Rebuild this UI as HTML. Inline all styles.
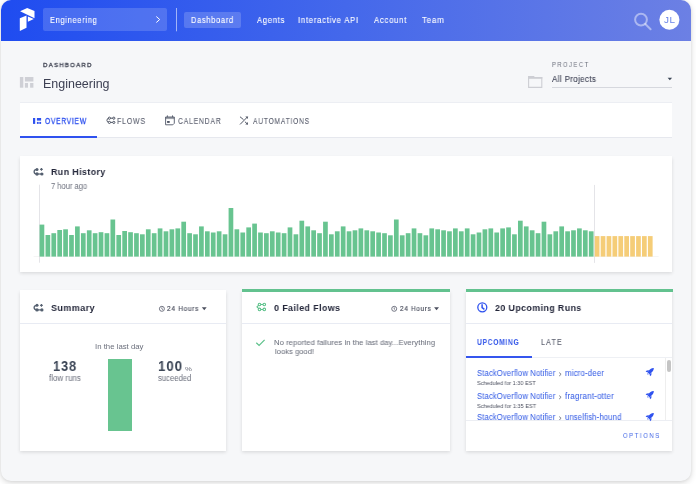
<!DOCTYPE html>
<html><head><meta charset="utf-8"><title>Dashboard</title>
<style>
html,body{margin:0;padding:0;}
body{width:696px;height:484px;overflow:hidden;position:relative;background:#ffffff;font-family:"Liberation Sans",sans-serif;}
.t{position:absolute;white-space:nowrap;line-height:1;transform-origin:0 0;will-change:transform;}
.b{position:absolute;}
.abs{position:absolute;overflow:visible;}
.win{position:absolute;left:1px;top:0px;width:690px;height:480.5px;border-radius:10px;background:#f6f7f9;box-shadow:0 2px 6px rgba(0,0,0,0.15),0 0 3px rgba(0,0,0,0.07);}
.nav{position:absolute;left:1px;top:0px;width:690px;height:40.5px;border-radius:10px 10px 0 0;background:linear-gradient(90deg,#1f4cf0 0%,#4468eb 50%,#6c80e4 100%);}
</style></head><body>
<div class="win"></div>
<div class="nav"></div>
<svg class="abs" width="696" height="45" viewBox="0 0 696 45" style="left:0;top:0">
<polygon points="20.1,11.3 27.2,8.0 34.5,11.1 34.5,18.2" fill="#fff"/>
<polygon points="27.9,16.5 33.8,18.9 27.9,21.8" fill="#fff"/>
<polygon points="19.8,18.2 26.5,15.6 26.5,27.8 19.8,31.1" fill="#fff"/>
<rect x="176" y="8" width="1" height="23.3" fill="rgba(255,255,255,0.55)"/>
<path d="M156.3,16.5 L159.7,19.5 L156.3,22.5" stroke="#fff" stroke-width="1.0" fill="none"/>
<circle cx="641" cy="19.6" r="5.9" stroke="rgba(255,255,255,0.45)" stroke-width="2" fill="none"/>
<path d="M645.3,24 L650.6,29.3" stroke="rgba(255,255,255,0.45)" stroke-width="2" stroke-linecap="round"/>
<circle cx="669.4" cy="19.7" r="10" fill="#fff"/>
</svg>
<div class="b" style="left:43px;top:8px;width:124.00px;height:23.00px;background:rgba(255,255,255,0.16);border-radius:2px"></div>
<div class="t" style="left:50.03px;top:16.00px;font-size:8.588px;font-weight:400;letter-spacing:0.859px;color:#fff;transform:scaleX(0.8597);-webkit-text-stroke:0.12px #fff;">Engineering</div>
<div class="b" style="left:184.2px;top:12px;width:56.50px;height:15.50px;background:rgba(255,255,255,0.18);border-radius:2px"></div>
<div class="t" style="left:191.45px;top:16.00px;font-size:8.734px;font-weight:400;letter-spacing:0.873px;color:#fff;transform:scaleX(0.8492);-webkit-text-stroke:0.12px #fff;">Dashboard</div>
<div class="t" style="left:257.02px;top:16.00px;font-size:8.734px;font-weight:400;letter-spacing:0.873px;color:#fff;transform:scaleX(0.8657);-webkit-text-stroke:0.12px #fff;">Agents</div>
<div class="t" style="left:298.10px;top:16.00px;font-size:8.734px;font-weight:400;letter-spacing:0.873px;color:#fff;transform:scaleX(0.8786);-webkit-text-stroke:0.12px #fff;">Interactive API</div>
<div class="t" style="left:374.06px;top:16.00px;font-size:8.734px;font-weight:400;letter-spacing:0.873px;color:#fff;transform:scaleX(0.8799);-webkit-text-stroke:0.12px #fff;">Account</div>
<div class="t" style="left:422.45px;top:16.00px;font-size:8.734px;font-weight:400;letter-spacing:0.873px;color:#fff;transform:scaleX(0.9053);-webkit-text-stroke:0.12px #fff;">Team</div>
<div class="t" style="left:664.16px;top:16.00px;font-size:9.025px;font-weight:400;letter-spacing:0.451px;color:#6a84e8;transform:scaleX(1.1019);">JL</div>
<svg class="abs" width="40" height="20" viewBox="0 0 40 20" style="left:0;top:70px">
<g fill="#cfd0d6">
<rect x="19.9" y="7.0" width="3.4" height="10.7"/>
<rect x="24.9" y="7.0" width="8.5" height="4.5"/>
<rect x="24.9" y="13.0" width="3.1" height="4.7"/>
<rect x="30.1" y="13.0" width="3.3" height="4.7"/>
</g></svg>
<div class="t" style="left:43.34px;top:62.00px;font-size:6.259px;font-weight:400;letter-spacing:1.252px;color:#3f4352;transform:scaleX(0.9786);-webkit-text-stroke:0.3px #3f4352;">DASHBOARD</div>
<div class="t" style="left:43.37px;top:78.00px;font-size:12.082px;font-weight:400;letter-spacing:0.000px;color:#3d4053;transform:scaleX(1.0320);">Engineering</div>
<div class="t" style="left:552.47px;top:62.00px;font-size:6.550px;font-weight:400;letter-spacing:1.638px;color:#6b6f7c;transform:scaleX(0.8953);">PROJECT</div>
<div class="t" style="left:552.10px;top:75.00px;font-size:8.588px;font-weight:400;letter-spacing:0.429px;color:#3d4053;transform:scaleX(0.9226);-webkit-text-stroke:0.12px #3d4053;">All Projects</div>
<div class="b" style="left:552px;top:86.6px;width:120.30px;height:1.00px;background:#d6d8de"></div>
<svg class="abs" width="200" height="30" viewBox="0 0 200 30" style="left:500px;top:65px">
<polygon points="167.6,12.8 172.1,12.8 169.85,15.2" fill="#3d4757"/>
<path d="M28.6,12.6 h13.2 v9.8 h-13.2 z" fill="none" stroke="#cdced4" stroke-width="1.1"/>
<path d="M28,11.0 h5.8 l1.1,1.1 h7.4 v1.6 h-14.3 z" fill="#cdced4"/>
</svg>
<div class="b" style="left:19.7px;top:102.1px;width:652.50px;height:35.90px;background:#fff;border-top:1px solid #eceef3;border-bottom:1px solid #e6e8ee;box-sizing:border-box"></div>
<div class="b" style="left:19.7px;top:135.9px;width:76.90px;height:2.00px;background:#2f52ef"></div>
<div class="t" style="left:45.29px;top:117.00px;font-size:8.297px;font-weight:400;letter-spacing:0.996px;color:#2f52ef;transform:scaleX(0.7973);-webkit-text-stroke:0.32px #2f52ef;">OVERVIEW</div>
<div class="t" style="left:117.12px;top:117.00px;font-size:8.297px;font-weight:400;letter-spacing:0.996px;color:#5d6170;transform:scaleX(0.8382);-webkit-text-stroke:0.1px #5d6170;">FLOWS</div>
<div class="t" style="left:178.47px;top:117.00px;font-size:8.297px;font-weight:400;letter-spacing:0.996px;color:#5d6170;transform:scaleX(0.8214);-webkit-text-stroke:0.1px #5d6170;">CALENDAR</div>
<div class="t" style="left:253.35px;top:117.00px;font-size:8.297px;font-weight:400;letter-spacing:0.996px;color:#5d6170;transform:scaleX(0.8018);-webkit-text-stroke:0.1px #5d6170;">AUTOMATIONS</div>
<svg class="abs" width="696" height="484" viewBox="0 0 696 484" style="left:0;top:0">
<g fill="#2f52ef">
<rect x="33" y="118" width="2.2" height="5.9"/>
<rect x="36.9" y="118" width="4.2" height="2.6"/>
<rect x="36.9" y="121.9" width="1.8" height="2"/>
<rect x="39.3" y="121.9" width="1.8" height="2"/>
</g>
<g fill="none" stroke="#4f5564" stroke-width="1.0" stroke-linejoin="round">
<path d="M109.4,118.2 A2.5,2.1 0 0 0 109.4,122.4"/>
<path d="M109.4,118.2 h4.4 M109.4,122.4 h4.4"/>
<g fill="#fff">
<circle cx="109.4" cy="118.2" r="1.1"/><circle cx="113.8" cy="118.2" r="1.1"/>
<circle cx="109.4" cy="122.4" r="1.1"/><circle cx="113.8" cy="122.4" r="1.1"/>
</g>
</g>
<g fill="none" stroke="#596070" stroke-width="0.95">
<path d="M165.6,117 h8.7 v6.3 l-1.5,1.5 h-7.2 z"/>
<rect x="165.6" y="117" width="8.7" height="2.1" fill="#4f5564" fill-opacity="0.55" stroke="none"/>
<path d="M167.4,115.4 v1.8 M172.5,115.4 v1.8"/>
<rect x="167.1" y="121" width="2.6" height="1.9" fill="#4f5564" stroke="none"/>
</g>
<g fill="none" stroke="#4f5564" stroke-width="1.0" stroke-linecap="round">
<path d="M240.3,117 L243.2,119.4 M245.2,122.0 L247.4,124.0 M240.3,124.2 L247.3,117.1"/>
<path d="M245.3,116.5 h2.6 v2.6 z" fill="#4f5564" stroke="none"/>
<path d="M247.9,121.9 v2.6 h-2.6 z" fill="#4f5564" stroke="none"/>
</g>
</svg>
<div class="b" style="left:20px;top:155.5px;width:652.40px;height:116.20px;background:#fff;box-shadow:0 1.5px 3.5px rgba(0,0,0,0.13)"></div>
<div class="t" style="left:51.31px;top:167.00px;font-size:9.607px;font-weight:700;letter-spacing:0.432px;color:#24273a;transform:scaleX(0.9243);">Run History</div>
<div class="t" style="left:51.40px;top:183.00px;font-size:8.149px;font-weight:400;letter-spacing:0.000px;color:#6b6f7c;transform:scaleX(0.9299);">7 hour ago</div>
<svg class="abs" width="696" height="484" viewBox="0 0 696 484" style="left:0;top:0"><rect x="33.6" y="256.3" width="625" height="0.6" fill="#eeeeee"/><rect x="39" y="184.7" width="0.7" height="78" fill="#d9d9de"/><rect x="594.2" y="184.9" width="0.7" height="78" fill="#d9d9de"/><rect x="39.60" y="224.60" width="4.7" height="32.00" fill="#68c490"/>
<rect x="45.51" y="235.00" width="4.7" height="21.60" fill="#68c490"/>
<rect x="51.41" y="233.20" width="4.7" height="23.40" fill="#68c490"/>
<rect x="57.32" y="230.00" width="4.7" height="26.60" fill="#68c490"/>
<rect x="63.22" y="229.30" width="4.7" height="27.30" fill="#68c490"/>
<rect x="69.13" y="235.00" width="4.7" height="21.60" fill="#68c490"/>
<rect x="75.04" y="226.40" width="4.7" height="30.20" fill="#68c490"/>
<rect x="80.94" y="233.20" width="4.7" height="23.40" fill="#68c490"/>
<rect x="86.85" y="230.30" width="4.7" height="26.30" fill="#68c490"/>
<rect x="92.75" y="233.20" width="4.7" height="23.40" fill="#68c490"/>
<rect x="98.66" y="232.20" width="4.7" height="24.40" fill="#68c490"/>
<rect x="104.57" y="233.20" width="4.7" height="23.40" fill="#68c490"/>
<rect x="110.47" y="219.50" width="4.7" height="37.10" fill="#68c490"/>
<rect x="116.38" y="235.00" width="4.7" height="21.60" fill="#68c490"/>
<rect x="122.28" y="231.00" width="4.7" height="25.60" fill="#68c490"/>
<rect x="128.19" y="232.20" width="4.7" height="24.40" fill="#68c490"/>
<rect x="134.10" y="233.20" width="4.7" height="23.40" fill="#68c490"/>
<rect x="140.00" y="234.30" width="4.7" height="22.30" fill="#68c490"/>
<rect x="145.91" y="229.30" width="4.7" height="27.30" fill="#68c490"/>
<rect x="151.81" y="233.20" width="4.7" height="23.40" fill="#68c490"/>
<rect x="157.72" y="228.40" width="4.7" height="28.20" fill="#68c490"/>
<rect x="163.63" y="231.30" width="4.7" height="25.30" fill="#68c490"/>
<rect x="169.53" y="229.30" width="4.7" height="27.30" fill="#68c490"/>
<rect x="175.44" y="228.40" width="4.7" height="28.20" fill="#68c490"/>
<rect x="181.34" y="221.70" width="4.7" height="34.90" fill="#68c490"/>
<rect x="187.25" y="233.20" width="4.7" height="23.40" fill="#68c490"/>
<rect x="193.16" y="234.30" width="4.7" height="22.30" fill="#68c490"/>
<rect x="199.06" y="226.40" width="4.7" height="30.20" fill="#68c490"/>
<rect x="204.97" y="231.30" width="4.7" height="25.30" fill="#68c490"/>
<rect x="210.87" y="232.50" width="4.7" height="24.10" fill="#68c490"/>
<rect x="216.78" y="231.30" width="4.7" height="25.30" fill="#68c490"/>
<rect x="222.69" y="234.30" width="4.7" height="22.30" fill="#68c490"/>
<rect x="228.59" y="208.00" width="4.7" height="48.60" fill="#68c490"/>
<rect x="234.50" y="229.30" width="4.7" height="27.30" fill="#68c490"/>
<rect x="240.40" y="232.50" width="4.7" height="24.10" fill="#68c490"/>
<rect x="246.31" y="227.40" width="4.7" height="29.20" fill="#68c490"/>
<rect x="252.22" y="223.60" width="4.7" height="33.00" fill="#68c490"/>
<rect x="258.12" y="232.50" width="4.7" height="24.10" fill="#68c490"/>
<rect x="264.03" y="233.20" width="4.7" height="23.40" fill="#68c490"/>
<rect x="269.93" y="231.30" width="4.7" height="25.30" fill="#68c490"/>
<rect x="275.84" y="232.50" width="4.7" height="24.10" fill="#68c490"/>
<rect x="281.75" y="233.20" width="4.7" height="23.40" fill="#68c490"/>
<rect x="287.65" y="227.40" width="4.7" height="29.20" fill="#68c490"/>
<rect x="293.56" y="234.30" width="4.7" height="22.30" fill="#68c490"/>
<rect x="299.46" y="220.70" width="4.7" height="35.90" fill="#68c490"/>
<rect x="305.37" y="226.40" width="4.7" height="30.20" fill="#68c490"/>
<rect x="311.28" y="230.30" width="4.7" height="26.30" fill="#68c490"/>
<rect x="317.18" y="233.20" width="4.7" height="23.40" fill="#68c490"/>
<rect x="323.09" y="221.70" width="4.7" height="34.90" fill="#68c490"/>
<rect x="328.99" y="234.30" width="4.7" height="22.30" fill="#68c490"/>
<rect x="334.90" y="231.30" width="4.7" height="25.30" fill="#68c490"/>
<rect x="340.81" y="226.40" width="4.7" height="30.20" fill="#68c490"/>
<rect x="346.71" y="231.30" width="4.7" height="25.30" fill="#68c490"/>
<rect x="352.62" y="230.30" width="4.7" height="26.30" fill="#68c490"/>
<rect x="358.52" y="228.40" width="4.7" height="28.20" fill="#68c490"/>
<rect x="364.43" y="230.30" width="4.7" height="26.30" fill="#68c490"/>
<rect x="370.34" y="231.30" width="4.7" height="25.30" fill="#68c490"/>
<rect x="376.24" y="232.50" width="4.7" height="24.10" fill="#68c490"/>
<rect x="382.15" y="233.20" width="4.7" height="23.40" fill="#68c490"/>
<rect x="388.05" y="235.30" width="4.7" height="21.30" fill="#68c490"/>
<rect x="393.96" y="219.50" width="4.7" height="37.10" fill="#68c490"/>
<rect x="399.87" y="235.30" width="4.7" height="21.30" fill="#68c490"/>
<rect x="405.77" y="233.20" width="4.7" height="23.40" fill="#68c490"/>
<rect x="411.68" y="228.40" width="4.7" height="28.20" fill="#68c490"/>
<rect x="417.58" y="233.20" width="4.7" height="23.40" fill="#68c490"/>
<rect x="423.49" y="235.30" width="4.7" height="21.30" fill="#68c490"/>
<rect x="429.40" y="228.40" width="4.7" height="28.20" fill="#68c490"/>
<rect x="435.30" y="229.30" width="4.7" height="27.30" fill="#68c490"/>
<rect x="441.21" y="230.30" width="4.7" height="26.30" fill="#68c490"/>
<rect x="447.11" y="231.30" width="4.7" height="25.30" fill="#68c490"/>
<rect x="453.02" y="228.40" width="4.7" height="28.20" fill="#68c490"/>
<rect x="458.93" y="231.30" width="4.7" height="25.30" fill="#68c490"/>
<rect x="464.83" y="228.40" width="4.7" height="28.20" fill="#68c490"/>
<rect x="470.74" y="234.30" width="4.7" height="22.30" fill="#68c490"/>
<rect x="476.64" y="232.50" width="4.7" height="24.10" fill="#68c490"/>
<rect x="482.55" y="229.30" width="4.7" height="27.30" fill="#68c490"/>
<rect x="488.46" y="228.40" width="4.7" height="28.20" fill="#68c490"/>
<rect x="494.36" y="232.50" width="4.7" height="24.10" fill="#68c490"/>
<rect x="500.27" y="228.40" width="4.7" height="28.20" fill="#68c490"/>
<rect x="506.17" y="227.40" width="4.7" height="29.20" fill="#68c490"/>
<rect x="512.08" y="234.30" width="4.7" height="22.30" fill="#68c490"/>
<rect x="517.99" y="220.70" width="4.7" height="35.90" fill="#68c490"/>
<rect x="523.89" y="226.40" width="4.7" height="30.20" fill="#68c490"/>
<rect x="529.80" y="230.30" width="4.7" height="26.30" fill="#68c490"/>
<rect x="535.70" y="233.20" width="4.7" height="23.40" fill="#68c490"/>
<rect x="541.61" y="221.70" width="4.7" height="34.90" fill="#68c490"/>
<rect x="547.52" y="234.30" width="4.7" height="22.30" fill="#68c490"/>
<rect x="553.42" y="231.30" width="4.7" height="25.30" fill="#68c490"/>
<rect x="559.33" y="226.40" width="4.7" height="30.20" fill="#68c490"/>
<rect x="565.23" y="231.30" width="4.7" height="25.30" fill="#68c490"/>
<rect x="571.14" y="230.30" width="4.7" height="26.30" fill="#68c490"/>
<rect x="577.05" y="228.40" width="4.7" height="28.20" fill="#68c490"/>
<rect x="582.95" y="230.30" width="4.7" height="26.30" fill="#68c490"/>
<rect x="588.86" y="231.30" width="4.7" height="25.30" fill="#68c490"/>
<rect x="594.76" y="236.10" width="4.7" height="20.5" fill="#f5cd78"/>
<rect x="600.67" y="236.10" width="4.7" height="20.5" fill="#f5cd78"/>
<rect x="606.58" y="236.10" width="4.7" height="20.5" fill="#f5cd78"/>
<rect x="612.48" y="236.10" width="4.7" height="20.5" fill="#f5cd78"/>
<rect x="618.39" y="236.10" width="4.7" height="20.5" fill="#f5cd78"/>
<rect x="624.29" y="236.10" width="4.7" height="20.5" fill="#f5cd78"/>
<rect x="630.20" y="236.10" width="4.7" height="20.5" fill="#f5cd78"/>
<rect x="636.11" y="236.10" width="4.7" height="20.5" fill="#f5cd78"/>
<rect x="642.01" y="236.10" width="4.7" height="20.5" fill="#f5cd78"/>
<rect x="647.92" y="236.10" width="4.7" height="20.5" fill="#f5cd78"/></svg>
<div class="b" style="left:19.7px;top:289.5px;width:206.40px;height:161.50px;background:#fff;box-shadow:0 1.5px 3.5px rgba(0,0,0,0.13);box-sizing:border-box;"></div>
<div class="b" style="left:19.7px;top:322.8px;width:206.40px;height:1.00px;background:#e8ebf3"></div>
<div class="b" style="left:242px;top:289.5px;width:208.00px;height:161.50px;background:#fff;box-shadow:0 1.5px 3.5px rgba(0,0,0,0.13);box-sizing:border-box;"></div>
<div class="b" style="left:242px;top:289.3px;width:208.00px;height:2.30px;background:#63c28f"></div>
<div class="b" style="left:242px;top:322.8px;width:208.00px;height:1.00px;background:#e8ebf3"></div>
<div class="b" style="left:465.7px;top:289.5px;width:206.80px;height:161.50px;background:#fff;box-shadow:0 1.5px 3.5px rgba(0,0,0,0.13);box-sizing:border-box;"></div>
<div class="b" style="left:465.7px;top:289.3px;width:207.50px;height:2.30px;background:#63c28f"></div>
<div class="b" style="left:465.7px;top:322.8px;width:206.80px;height:1.00px;background:#e8ebf3"></div>
<div class="t" style="left:51.49px;top:303.00px;font-size:9.898px;font-weight:700;letter-spacing:0.445px;color:#24273a;transform:scaleX(0.9126);">Summary</div>
<div class="t" style="left:274.36px;top:303.00px;font-size:9.898px;font-weight:700;letter-spacing:0.445px;color:#24273a;transform:scaleX(0.9010);">0 Failed Flows</div>
<div class="t" style="left:495.19px;top:303.00px;font-size:9.898px;font-weight:700;letter-spacing:0.445px;color:#24273a;transform:scaleX(0.8975);">20 Upcoming Runs</div>
<div class="t" style="left:167.43px;top:306.00px;font-size:6.550px;font-weight:400;letter-spacing:0.786px;color:#4b4f5e;transform:scaleX(0.9770);-webkit-text-stroke:0.18px #4b4f5e;">24 Hours</div>
<div class="t" style="left:400.48px;top:306.00px;font-size:6.550px;font-weight:400;letter-spacing:0.786px;color:#4b4f5e;transform:scaleX(0.9606);-webkit-text-stroke:0.18px #4b4f5e;">24 Hours</div>
<div class="t" style="left:95.11px;top:343.00px;font-size:7.597px;font-weight:400;letter-spacing:0.000px;color:#6b6f7c;transform:scaleX(1.0278);">In the last day</div>
<div class="b" style="left:108.3px;top:359.1px;width:23.70px;height:72.00px;background:#68c490"></div>
<div class="t" style="left:53.40px;top:359.00px;font-size:14.702px;font-weight:700;letter-spacing:1.029px;color:#3d4757;transform:scaleX(0.8677);">138</div>
<div class="t" style="left:49.26px;top:375.00px;font-size:8.149px;font-weight:400;letter-spacing:0.000px;color:#6b6f7c;transform:scaleX(0.9783);">flow runs</div>
<div class="t" style="left:158.07px;top:359.00px;font-size:14.702px;font-weight:700;letter-spacing:1.029px;color:#3d4757;transform:scaleX(0.9000);">100</div>
<div class="t" style="left:185.23px;top:366.00px;font-size:6.259px;font-weight:400;letter-spacing:0.000px;color:#6b6f7c;transform:scaleX(1.2438);">%</div>
<div class="t" style="left:158.48px;top:375.00px;font-size:8.149px;font-weight:400;letter-spacing:0.000px;color:#6b6f7c;transform:scaleX(0.9433);">suceeded</div>
<div class="t" style="left:274.01px;top:339.00px;font-size:7.715px;font-weight:400;letter-spacing:0.077px;color:#6b6f7c;transform:scaleX(0.9863);-webkit-text-stroke:0.05px #6b6f7c;">No reported failures in the last day...Everything</div>
<div class="t" style="left:275.49px;top:348.00px;font-size:7.735px;font-weight:400;letter-spacing:0.077px;color:#6b6f7c;transform:scaleX(0.9712);-webkit-text-stroke:0.05px #6b6f7c;">looks good!</div>
<div class="t" style="left:477.01px;top:338.00px;font-size:8.734px;font-weight:700;letter-spacing:0.873px;color:#3a5cea;transform:scaleX(0.7723);">UPCOMING</div>
<div class="t" style="left:541.45px;top:338.00px;font-size:8.734px;font-weight:400;letter-spacing:1.223px;color:#5d6170;transform:scaleX(0.8349);-webkit-text-stroke:0.1px #5d6170;">LATE</div>
<div class="b" style="left:465.6px;top:357.4px;width:206.80px;height:1.00px;background:#eef0f4"></div>
<div class="b" style="left:465.6px;top:356.4px;width:66.20px;height:2.00px;background:#3556ee"></div>
<div class="t" style="left:477.09px;top:369.00px;font-size:8.297px;font-weight:400;letter-spacing:0.166px;color:#3d63e6;transform:scaleX(0.9177);-webkit-text-stroke:0.05px #3d63e6;">StackOverflow Notifier</div>
<div class="t" style="left:565.24px;top:370.00px;font-size:8.149px;font-weight:400;letter-spacing:0.163px;color:#3d63e6;transform:scaleX(0.9670);-webkit-text-stroke:0.05px #3d63e6;">micro-deer</div>
<svg class="abs" width="10" height="10" viewBox="0 0 10 10" style="left:555px;top:369px"><path d="M4.2,3.6 L6.1,5.3 L4.2,7" fill="none" stroke="#6b6f7c" stroke-width="0.9"/></svg>
<div class="t" style="left:477.44px;top:381.00px;font-size:5.822px;font-weight:400;letter-spacing:0.000px;color:#4b4f5e;transform:scaleX(0.9504);">Scheduled for 1:30 EST</div>
<div class="t" style="left:477.09px;top:392.00px;font-size:8.297px;font-weight:400;letter-spacing:0.166px;color:#3d63e6;transform:scaleX(0.9177);-webkit-text-stroke:0.05px #3d63e6;">StackOverflow Notifier</div>
<div class="t" style="left:565.33px;top:393.00px;font-size:8.149px;font-weight:400;letter-spacing:0.163px;color:#3d63e6;transform:scaleX(0.9915);-webkit-text-stroke:0.05px #3d63e6;">fragrant-otter</div>
<svg class="abs" width="10" height="10" viewBox="0 0 10 10" style="left:555px;top:392px"><path d="M4.2,3.6 L6.1,5.3 L4.2,7" fill="none" stroke="#6b6f7c" stroke-width="0.9"/></svg>
<div class="t" style="left:477.44px;top:404.00px;font-size:5.822px;font-weight:400;letter-spacing:0.000px;color:#4b4f5e;transform:scaleX(0.9566);">Scheduled for 1:35 EST</div>
<div class="t" style="left:477.42px;top:413.00px;font-size:8.297px;font-weight:400;letter-spacing:0.166px;color:#3d63e6;transform:scaleX(0.9166);-webkit-text-stroke:0.05px #3d63e6;">StackOverflow Notifier</div>
<div class="t" style="left:565.39px;top:414.00px;font-size:8.149px;font-weight:400;letter-spacing:0.163px;color:#3d63e6;transform:scaleX(0.9430);-webkit-text-stroke:0.05px #3d63e6;">unselfish-hound</div>
<svg class="abs" width="10" height="10" viewBox="0 0 10 10" style="left:555px;top:413px"><path d="M4.2,3.6 L6.1,5.3 L4.2,7" fill="none" stroke="#6b6f7c" stroke-width="0.9"/></svg>
<div class="b" style="left:465.7px;top:420.3px;width:206.80px;height:30.70px;background:#fff;border-top:1px solid #eceef3;box-sizing:border-box"></div>
<div class="t" style="left:623.47px;top:433.00px;font-size:6.550px;font-weight:400;letter-spacing:1.965px;color:#4a6de6;transform:scaleX(0.8743);-webkit-text-stroke:0.05px #4a6de6;">OPTIONS</div>
<div class="b" style="left:664.9px;top:358.4px;width:0.80px;height:61.90px;background:#eeeeee"></div>
<div class="b" style="left:666.6px;top:360.4px;width:4.80px;height:11.20px;background:#c4c4c4;border-radius:2.4px"></div>
<svg class="abs" width="696" height="484" viewBox="0 0 696 484" style="left:0;top:0">
<g fill="#556070" stroke="#556070">
<path d="M37.0,169.4 A2.9,2.3 0 0 0 37.0,174.0" fill="none" stroke-width="1.3"/>
<circle cx="37.0" cy="169.4" r="1.5" stroke="none"/>
<circle cx="37.0" cy="174.0" r="1.7" stroke="none"/>
<circle cx="41.9" cy="174.0" r="1.6" stroke="none"/>
<path d="M37.0,174.0 h4.9" stroke-width="1.2"/>
<path d="M40.1,169.4 h2.7 M41.45,168.05 v2.7" stroke-width="1.15"/>
</g>
<g fill="#556070" stroke="#556070">
<path d="M37.0,305.3 A2.9,2.3 0 0 0 37.0,309.9" fill="none" stroke-width="1.3"/>
<circle cx="37.0" cy="305.3" r="1.5" stroke="none"/>
<circle cx="37.0" cy="309.9" r="1.7" stroke="none"/>
<circle cx="41.9" cy="309.9" r="1.6" stroke="none"/>
<path d="M37.0,309.9 h4.9" stroke-width="1.2"/>
<path d="M40.1,305.3 h2.7 M41.45,303.95 v2.7" stroke-width="1.15"/>
</g>
<g fill="none" stroke="#5cc18a" stroke-width="1.05" stroke-linejoin="round">
<path d="M259.5,304.5 L256.9,306.95 L259.5,309.4"/>
<path d="M259.5,304.5 h4.8 M259.5,309.4 h4.8"/>
<g fill="#fff">
<circle cx="259.5" cy="304.5" r="1.3"/><circle cx="264.3" cy="304.5" r="1.3"/>
<circle cx="259.5" cy="309.4" r="1.3"/><circle cx="264.3" cy="309.4" r="1.3"/>
</g>
</g>
<path d="M256.3,342.7 L259.1,345.4 L264.6,339.8" fill="none" stroke="#5cc18a" stroke-width="1.2"/>
<g fill="none" stroke="#2f52ef">
<circle cx="482.3" cy="307.3" r="4.5" stroke-width="1.3"/>
<path d="M482.1,304.3 v3.3 l2.3,1.7" stroke-width="1.5"/>
</g>
<g fill="none" stroke="#5d6170" stroke-width="0.85">
<circle cx="161.9" cy="308.8" r="2.5"/><path d="M161.9,307.4 v1.5 l0.9,0.8"/>
<circle cx="394.2" cy="308.8" r="2.5"/><path d="M394.2,307.4 v1.5 l0.9,0.8"/>
</g>
<polygon points="201.8,307.3 206.7,307.3 204.25,310.2" fill="#4b4f5e"/>
<polygon points="434.1,307.3 439.0,307.3 436.55,310.2" fill="#4b4f5e"/>
</svg>
<svg class="abs" width="20" height="20" viewBox="0 0 20 20" style="left:640px;top:361px">
<g fill="#2f52ef" transform="translate(10.2,10.6) rotate(45) scale(0.9)">
<path d="M0,-5.6 C1.6,-4.4 2.1,-2.2 1.8,0.2 L1.7,2.6 L-1.7,2.6 L-1.8,0.2 C-2.1,-2.2 -1.6,-4.4 0,-5.6 Z"/>
<path d="M1.7,-0.3 L3.6,1.8 L3.5,3.7 L1.6,2.6 Z"/>
<path d="M-1.7,-0.3 L-3.6,1.8 L-3.5,3.7 L-1.6,2.6 Z"/>
<path d="M-0.9,3.1 L0.9,3.1 L0,4.6 Z"/>
</g></svg>
<svg class="abs" width="20" height="20" viewBox="0 0 20 20" style="left:640px;top:384px">
<g fill="#2f52ef" transform="translate(10.2,10.6) rotate(45) scale(0.9)">
<path d="M0,-5.6 C1.6,-4.4 2.1,-2.2 1.8,0.2 L1.7,2.6 L-1.7,2.6 L-1.8,0.2 C-2.1,-2.2 -1.6,-4.4 0,-5.6 Z"/>
<path d="M1.7,-0.3 L3.6,1.8 L3.5,3.7 L1.6,2.6 Z"/>
<path d="M-1.7,-0.3 L-3.6,1.8 L-3.5,3.7 L-1.6,2.6 Z"/>
<path d="M-0.9,3.1 L0.9,3.1 L0,4.6 Z"/>
</g></svg>
<svg class="abs" width="20" height="20" viewBox="0 0 20 20" style="left:640px;top:406px">
<g fill="#2f52ef" transform="translate(10.2,10.6) rotate(45) scale(0.9)">
<path d="M0,-5.6 C1.6,-4.4 2.1,-2.2 1.8,0.2 L1.7,2.6 L-1.7,2.6 L-1.8,0.2 C-2.1,-2.2 -1.6,-4.4 0,-5.6 Z"/>
<path d="M1.7,-0.3 L3.6,1.8 L3.5,3.7 L1.6,2.6 Z"/>
<path d="M-1.7,-0.3 L-3.6,1.8 L-3.5,3.7 L-1.6,2.6 Z"/>
<path d="M-0.9,3.1 L0.9,3.1 L0,4.6 Z"/>
</g></svg>
</body></html>
